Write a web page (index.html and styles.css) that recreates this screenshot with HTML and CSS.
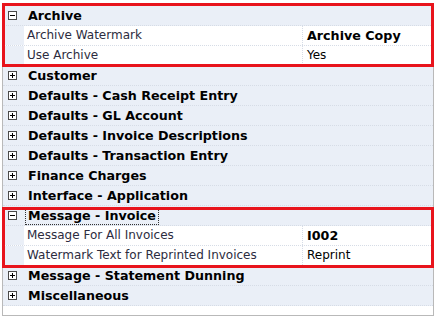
FILE: index.html
```html
<!DOCTYPE html>
<html lang="en">
<head>
    <meta charset="UTF-8">
    <title>Property Grid</title>
    <link rel="stylesheet" href="styles.css">
</head>
<body>
    <div class="grid">
        <div class="row cat"><span class="box minus"></span><span class="cat-name">Archive</span></div>
        <div class="row prop"><span class="gutter"></span><span class="name">Archive Watermark</span><span class="value bold">Archive Copy</span></div>
        <div class="row prop"><span class="gutter"></span><span class="name">Use Archive</span><span class="value">Yes</span></div>
        <div class="row cat"><span class="box plus"></span><span class="cat-name">Customer</span></div>
        <div class="row cat"><span class="box plus"></span><span class="cat-name">Defaults - Cash Receipt Entry</span></div>
        <div class="row cat"><span class="box plus"></span><span class="cat-name">Defaults - GL Account</span></div>
        <div class="row cat"><span class="box plus"></span><span class="cat-name">Defaults - Invoice Descriptions</span></div>
        <div class="row cat"><span class="box plus"></span><span class="cat-name">Defaults - Transaction Entry</span></div>
        <div class="row cat"><span class="box plus"></span><span class="cat-name">Finance Charges</span></div>
        <div class="row cat"><span class="box plus"></span><span class="cat-name">Interface - Application</span></div>
        <div class="row cat"><span class="box minus"></span><span class="cat-name focused">Message - Invoice</span></div>
        <div class="row prop"><span class="gutter"></span><span class="name">Message For All Invoices</span><span class="value bold">I002</span></div>
        <div class="row prop"><span class="gutter"></span><span class="name">Watermark Text for Reprinted Invoices</span><span class="value">Reprint</span></div>
        <div class="row cat"><span class="box plus"></span><span class="cat-name">Message - Statement Dunning</span></div>
        <div class="row cat"><span class="box plus"></span><span class="cat-name">Miscellaneous</span></div>
    </div>

    <!-- annotation boxes drawn over the grid -->
    <div class="mark mark-archive"></div>
    <div class="mark mark-invoice"></div>
</body>
</html>
```

FILE: styles.css
```css
body { margin: 0; padding-top: 6px; background-color: #fff; font-family: "DejaVu Sans", Verdana, sans-serif; font-size: 12px; color: #000; }
.grid { margin-left: 2px; width: 430px; border-left: 1px solid #b9b9b9; border-right: 1px solid #b9b9b9; border-bottom: 1px solid #b9b9b9; padding-bottom: 9px; }
.row { height: 20px; display: flex; align-items: stretch; box-sizing: border-box; border-bottom: 1px dotted #d6dce6; }
.cat { background-color: #eaeff7; align-items: center; }
.box { width: 9px; height: 9px; margin-left: 5px; margin-right: 10px; box-sizing: border-box; border: 1px solid #4a4a4a; background-color: #fff; position: relative; flex-shrink: 0; }
.box::before { content: ""; position: absolute; left: 1px; top: 3px; width: 5px; height: 1px; background-color: #000; }
.plus::after { content: ""; position: absolute; left: 3px; top: 1px; width: 1px; height: 5px; background-color: #000; }
.cat-name { font-weight: bold; font-size: 12.7px; line-height: 16px; padding: 0 2px; margin-left: -2px; border: 1px solid transparent; }
.focused { border: 1px dotted #333; }
.gutter { width: 21px; background-color: #eaeff7; flex-shrink: 0; }
.name { width: 275px; padding-left: 3px; color: #2c2c40; line-height: 19px; border-right: 1px dotted #d6dce6; white-space: nowrap; overflow: hidden; }
.value { padding-left: 4px; line-height: 19px; }
.bold { font-weight: bold; font-size: 12.7px; }
.mark { position: absolute; left: 2px; width: 432px; border: 3px solid #e8141c; box-sizing: border-box; }
.mark-archive { top: 3px; height: 64px; }
.mark-invoice { top: 207px; height: 61px; }
```
